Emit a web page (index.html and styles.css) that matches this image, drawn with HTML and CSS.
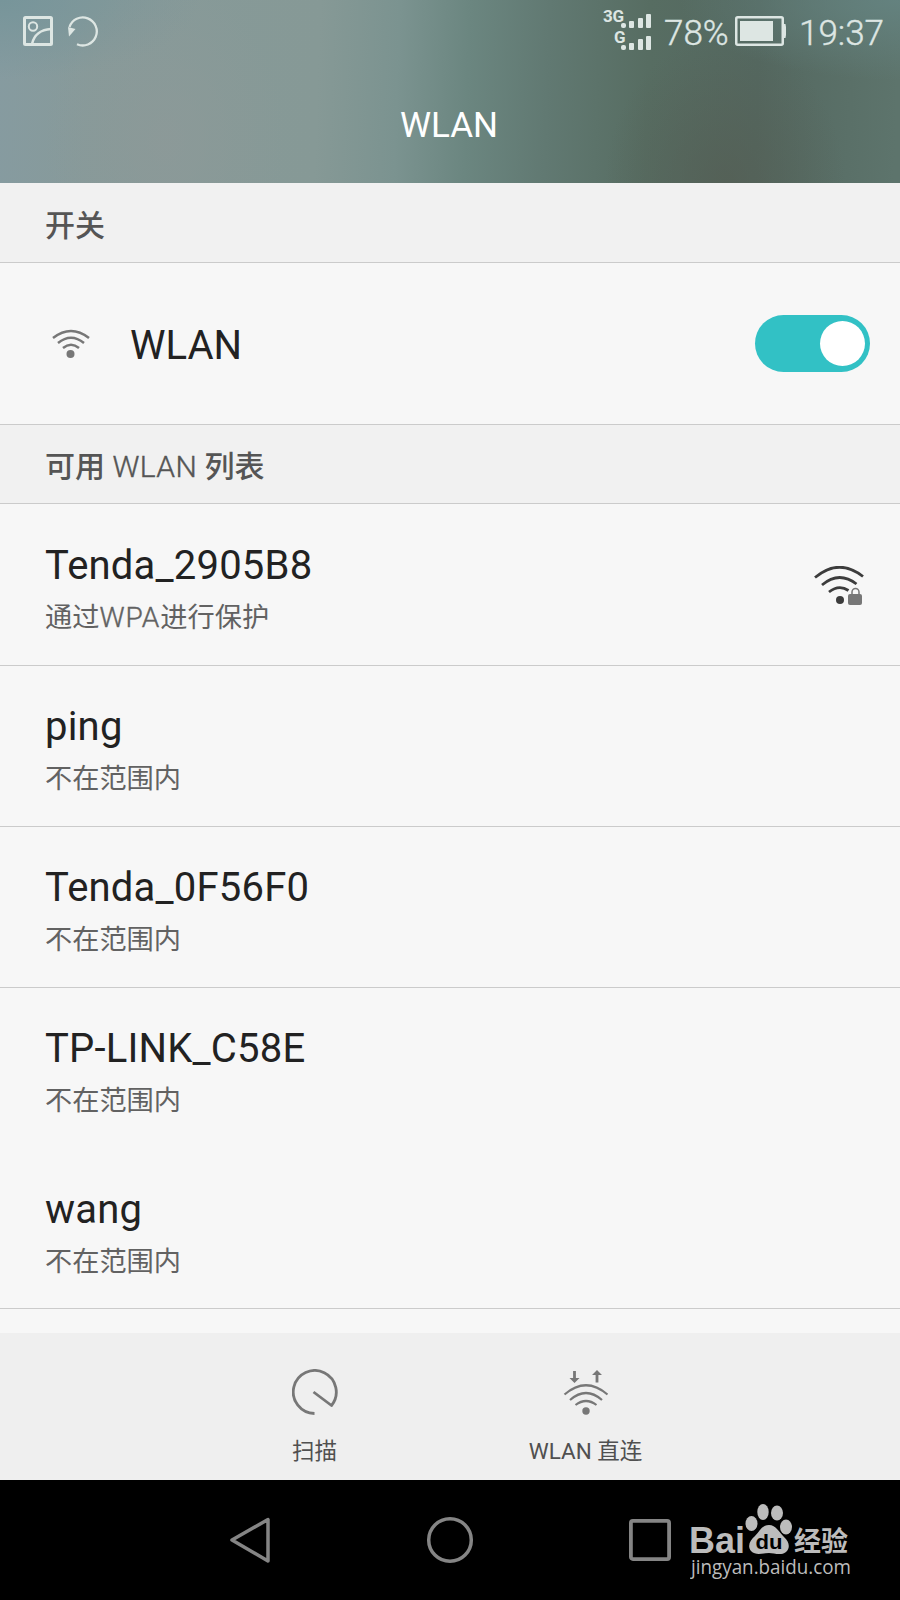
FILE: index.html
```html
<!DOCTYPE html>
<html lang="zh-CN">
<head>
<meta charset="utf-8">
<title>WLAN</title>
<link rel="stylesheet" href="styles.css">
</head>
<body>
<div class="phone">
  <header class="header">
    <div class="status">
      <svg class="status-left" width="80" height="32" viewBox="0 0 80 32" fill="none" stroke="#dde6e3">
        <rect x="1.5" y="1.5" width="27" height="27" rx="1" stroke-width="3"/>
        <circle cx="10" cy="10.500" r="4.200" stroke-width="2"/>
        <path d="M9 28C11 19 18 13.500 28 13" stroke-width="2.500"/>
        <path d="M54 28.200A14 14 0 1 0 46.500 11" stroke-width="2.300"/>
        <path d="M45 11L52.500 13L46 20.500Z" fill="#dde6e3" stroke="none"/>
      </svg>
      <div class="status-right">
        <svg width="52" height="46" viewBox="0 0 52 46" fill="#dde6e3">
          <text class="net" x="1" y="15" textLength="21">3G</text>
          <text class="net" x="12" y="36" textLength="11">G</text>
          <rect x="19" y="16" width="5" height="5" rx="2"/><rect x="27" y="14" width="5" height="7" rx="1"/><rect x="36" y="11" width="5" height="10" rx="1"/><rect x="44" y="7" width="5" height="14" rx="1"/>
          <rect x="19" y="38" width="5" height="5" rx="2"/><rect x="27" y="36" width="5" height="7" rx="1"/><rect x="36" y="32" width="5" height="11" rx="1"/><rect x="44" y="29" width="5" height="14" rx="1"/>
        </svg>
        <span class="percent">78%</span>
        <svg class="battery" width="52" height="30" viewBox="0 0 52 30">
          <rect x="1.250" y="1.250" width="46.500" height="27.500" rx="1.500" fill="none" stroke="#dde6e3" stroke-width="2.500"/>
          <path d="M5 5h33v20H5zM48 8h2.500l.5 3v8l-.5 3H48z" fill="#dde6e3"/>
        </svg>
        <span class="clock">19:37</span>
      </div>
    </div>
    <h1 class="title">WLAN</h1>
  </header>

  <main class="content">
    <h2 class="section">开关</h2>
    <div class="switch-row">
      <svg class="wifi" width="38" height="30" viewBox="0 0 38 30" fill="none" stroke="#777" stroke-width="2.500">
        <path d="M1 9Q19-5 37 9M6 14Q19 3.500 32 14M11 19Q19 12.500 27 19"/>
        <circle cx="18.500" cy="25" r="4" fill="#777" stroke="none"/>
      </svg>
      <span class="switch-label">WLAN</span>
      <span class="toggle"><span class="knob"></span></span>
    </div>
    <h2 class="section">可用 <span class="latin">WLAN</span> 列表</h2>
    <ul class="networks">
      <li class="network first">
        <div><div class="name">Tenda_2905B8</div><div class="note">通过<span class="note-latin">WPA</span>进行保护</div></div>
        <svg class="signal" width="50" height="40" viewBox="0 0 50 40" fill="none" stroke="#3c3c3c" stroke-width="2.800">
          <path d="M1 11.500Q25-8.500 49 10.500M8 19Q25 4.500 42.500 18M15 26Q25 18 34.500 24.500"/>
          <circle cx="26" cy="34" r="4" fill="#3c3c3c" stroke="none"/>
          <path d="M38 29v-3a3.500 3.500 0 0 1 7 0v3" stroke="#777" stroke-width="1.500"/>
          <rect x="34" y="28" width="14" height="11" rx="2" fill="#777" stroke="none"/>
        </svg>
      </li>
      <li class="network"><div><div class="name">ping</div><div class="note">不在范围内</div></div></li>
      <li class="network"><div><div class="name">Tenda_0F56F0</div><div class="note">不在范围内</div></div></li>
      <li class="network plain"><div><div class="name">TP-LINK_C58E</div><div class="note">不在范围内</div></div></li>
      <li class="network"><div><div class="name">wang</div><div class="note">不在范围内</div></div></li>
    </ul>
  </main>

  <div class="toolbar">
    <div class="action">
      <svg width="46" height="46" viewBox="0 0 46 46" fill="none" stroke="#777" stroke-width="2.800" stroke-linejoin="round">
        <path d="M22.500 44.500A21.500 21.500 0 1 1 39.500 36.500L21.500 23"/>
      </svg>
      <span>扫描</span>
    </div>
    <div class="action">
      <svg width="46" height="46" viewBox="0 0 46 46" fill="none" stroke="#777" stroke-width="2.200">
        <path d="M1.500 25.500Q23 7 44.500 25.500M7 31Q23 17 39 31M12.500 36Q23 28 33.500 36"/>
        <circle cx="23" cy="42" r="3.700" fill="#777" stroke="none"/>
        <path d="M11.500 2v9M34 13.500V4" stroke-width="2.800"/>
        <path d="M6.500 9h10l-5 5zM29 6h10l-5-5z" fill="#777" stroke="none"/>
      </svg>
      <span>WLAN 直连</span>
    </div>
  </div>

  <nav class="navbar">
    <svg width="42" height="48" viewBox="0 0 42 48" fill="none" stroke="#858585" stroke-width="3.500" stroke-linejoin="round"><path d="M3 24L39 3.500V45Z"/></svg>
    <svg width="48" height="48" viewBox="0 0 48 48" fill="none" stroke="#858585" stroke-width="3.500"><circle cx="24" cy="24" r="21.300"/></svg>
    <svg width="42" height="48" viewBox="0 0 42 48" fill="none" stroke="#858585" stroke-width="3.800"><rect x="1.900" y="4.900" width="38.200" height="38.200" rx="2"/></svg>
    <svg class="watermark" width="170" height="90" viewBox="0 0 170 90" fill="#bcbcbc">
      <text class="brand" x="-1" y="53" textLength="56" lengthAdjust="spacingAndGlyphs">Bai</text>
      <ellipse cx="61.500" cy="23.500" rx="6" ry="7.500"/>
      <ellipse cx="73" cy="12" rx="5.700" ry="8"/>
      <ellipse cx="87" cy="13" rx="6" ry="7.500"/>
      <ellipse cx="96" cy="27" rx="6" ry="7.500"/>
      <path d="M79 25C86 25 89 32 94 37C100 42 100 49 96 52C91 56 84 53 79 53C73 53 66 56 61 51C57 46 60 40 65 36C70 31 72 25 79 25Z"/>
      <text class="du" x="65.500" y="49" textLength="27" lengthAdjust="spacingAndGlyphs">du</text>
      <text class="exp" x="104" y="51" textLength="54" lengthAdjust="spacingAndGlyphs">经验</text>
      <text class="url" x="1" y="74" textLength="160" lengthAdjust="spacingAndGlyphs">jingyan.baidu.com</text>
    </svg>
  </nav>
</div>
</body>
</html>
```
FILE: styles.css
```css
* { box-sizing: border-box; }
body { margin: 0; font-family: Roboto, "Noto Sans CJK SC", sans-serif; }
svg { display: block; flex: none; }
.phone { width: 900px; height: 1600px; display: flex; flex-direction: column; background: #f7f7f7; overflow: hidden; }

.header {
  height: 183px;
  flex: none;
  background:
    radial-gradient(ellipse 120px 150px at 725px 185px, rgba(84, 93, 83, .7) 0%, rgba(84, 96, 86, 0) 100%),
    radial-gradient(ellipse 120px 160px at 165px 140px, rgba(142, 153, 152, .7) 0%, rgba(142, 153, 152, 0) 100%),
    radial-gradient(ellipse 220px 80px at 900px 0, #64827f 0%, rgba(100, 130, 127, 0) 100%),
    radial-gradient(ellipse 200px 80px at 0 0, #77959a 0%, rgba(119, 149, 154, 0) 100%),
    linear-gradient(92deg, #869ba0 0, #879a9a 90px, #869996 320px, #7b9390 400px, #6b8680 470px, #617972 550px, #576d62 650px, #546860 760px, #5d746c 900px);
}
.status { height: 62px; display: flex; justify-content: space-between; color: #dde6e3; }
.status-left { margin: 16px 0 0 23px; }
.status-right { display: flex; padding-right: 15px; }
.status-right > svg:first-child { margin-top: 7px; }
.net { font: 700 17px Roboto, sans-serif; }
.percent, .clock { font-size: 35px; font-weight: 300; line-height: 42px; padding-top: 13px; white-space: nowrap; -webkit-text-stroke: .4px #dde6e3; }
.percent { width: 81px; padding-left: 10px; }
.battery { margin: 16px 0 0; }
.clock { width: 86px; margin-left: 12px; }
.title { margin: 43px 0 0; padding-right: 2px; text-align: center; color: #fff; font-size: 35px; font-weight: 400; line-height: 42px; }

.content { flex: 1; }
.section {
  margin: 0;
  height: 80px;
  padding-left: 45px;
  background: #f1f1f1;
  border-bottom: 1px solid #cbcbcb;
  color: #555;
  font-size: 30px;
  font-weight: 500;
  line-height: 85px;
}
.latin { font-weight: 300; letter-spacing: .4px; -webkit-text-stroke: .4px #555; }
.switch-row { height: 162px; display: flex; align-items: center; padding: 0 30px 0 52px; border-bottom: 1px solid #cbcbcb; }
.switch-row + .section { height: 79px; line-height: 84px; }
.switch-label { margin-left: 40px; padding-top: 3px; flex: 1; font-size: 40px; color: #222; }
.toggle { width: 115px; height: 57px; border-radius: 29px; background: #32c1c5; display: flex; justify-content: flex-end; align-items: center; padding-right: 5px; }
.knob { width: 45px; height: 45px; border-radius: 50%; background: #fff; }

.networks { margin: 0; padding: 0; list-style: none; }
.network { height: 161px; display: flex; justify-content: space-between; padding: 37px 36px 0 45px; border-bottom: 1px solid #cbcbcb; }
.network.first { height: 162px; padding-top: 38px; }
.network.plain { height: 160px; border-bottom-color: transparent; }
.network.plain + .network { padding-top: 38px; }
.name { font-size: 40px; line-height: 48px; color: #222; letter-spacing: .2px; }
.note { margin-top: 9px; font-size: 27.200px; line-height: 38px; color: #626262; font-weight: 400; }
.note-latin { font-weight: 300; font-size: 28px; letter-spacing: 1px; -webkit-text-stroke: .4px #626262; }
.signal { margin-top: 24px; }

.toolbar { height: 147px; flex: none; display: flex; justify-content: center; background: #efefef; }
.action { width: 271px; display: flex; flex-direction: column; align-items: center; padding-top: 36px; font-size: 22.500px; line-height: 30px; color: #505050; }
.action span { margin-top: 21px; }

.navbar { position: relative; height: 120px; flex: none; display: flex; justify-content: space-between; align-items: center; background: #000; padding: 0 229px 0 229px; }
.watermark { position: absolute; left: 690px; top: 20px; }
.brand { font: 700 36px "Liberation Sans", sans-serif; }
.du { font: 700 21px "Liberation Sans", sans-serif; fill: #000; }
.exp { font: 700 27px "Noto Sans CJK SC", sans-serif; }
.url { font: 400 20px "Open Sans", sans-serif; }
```
